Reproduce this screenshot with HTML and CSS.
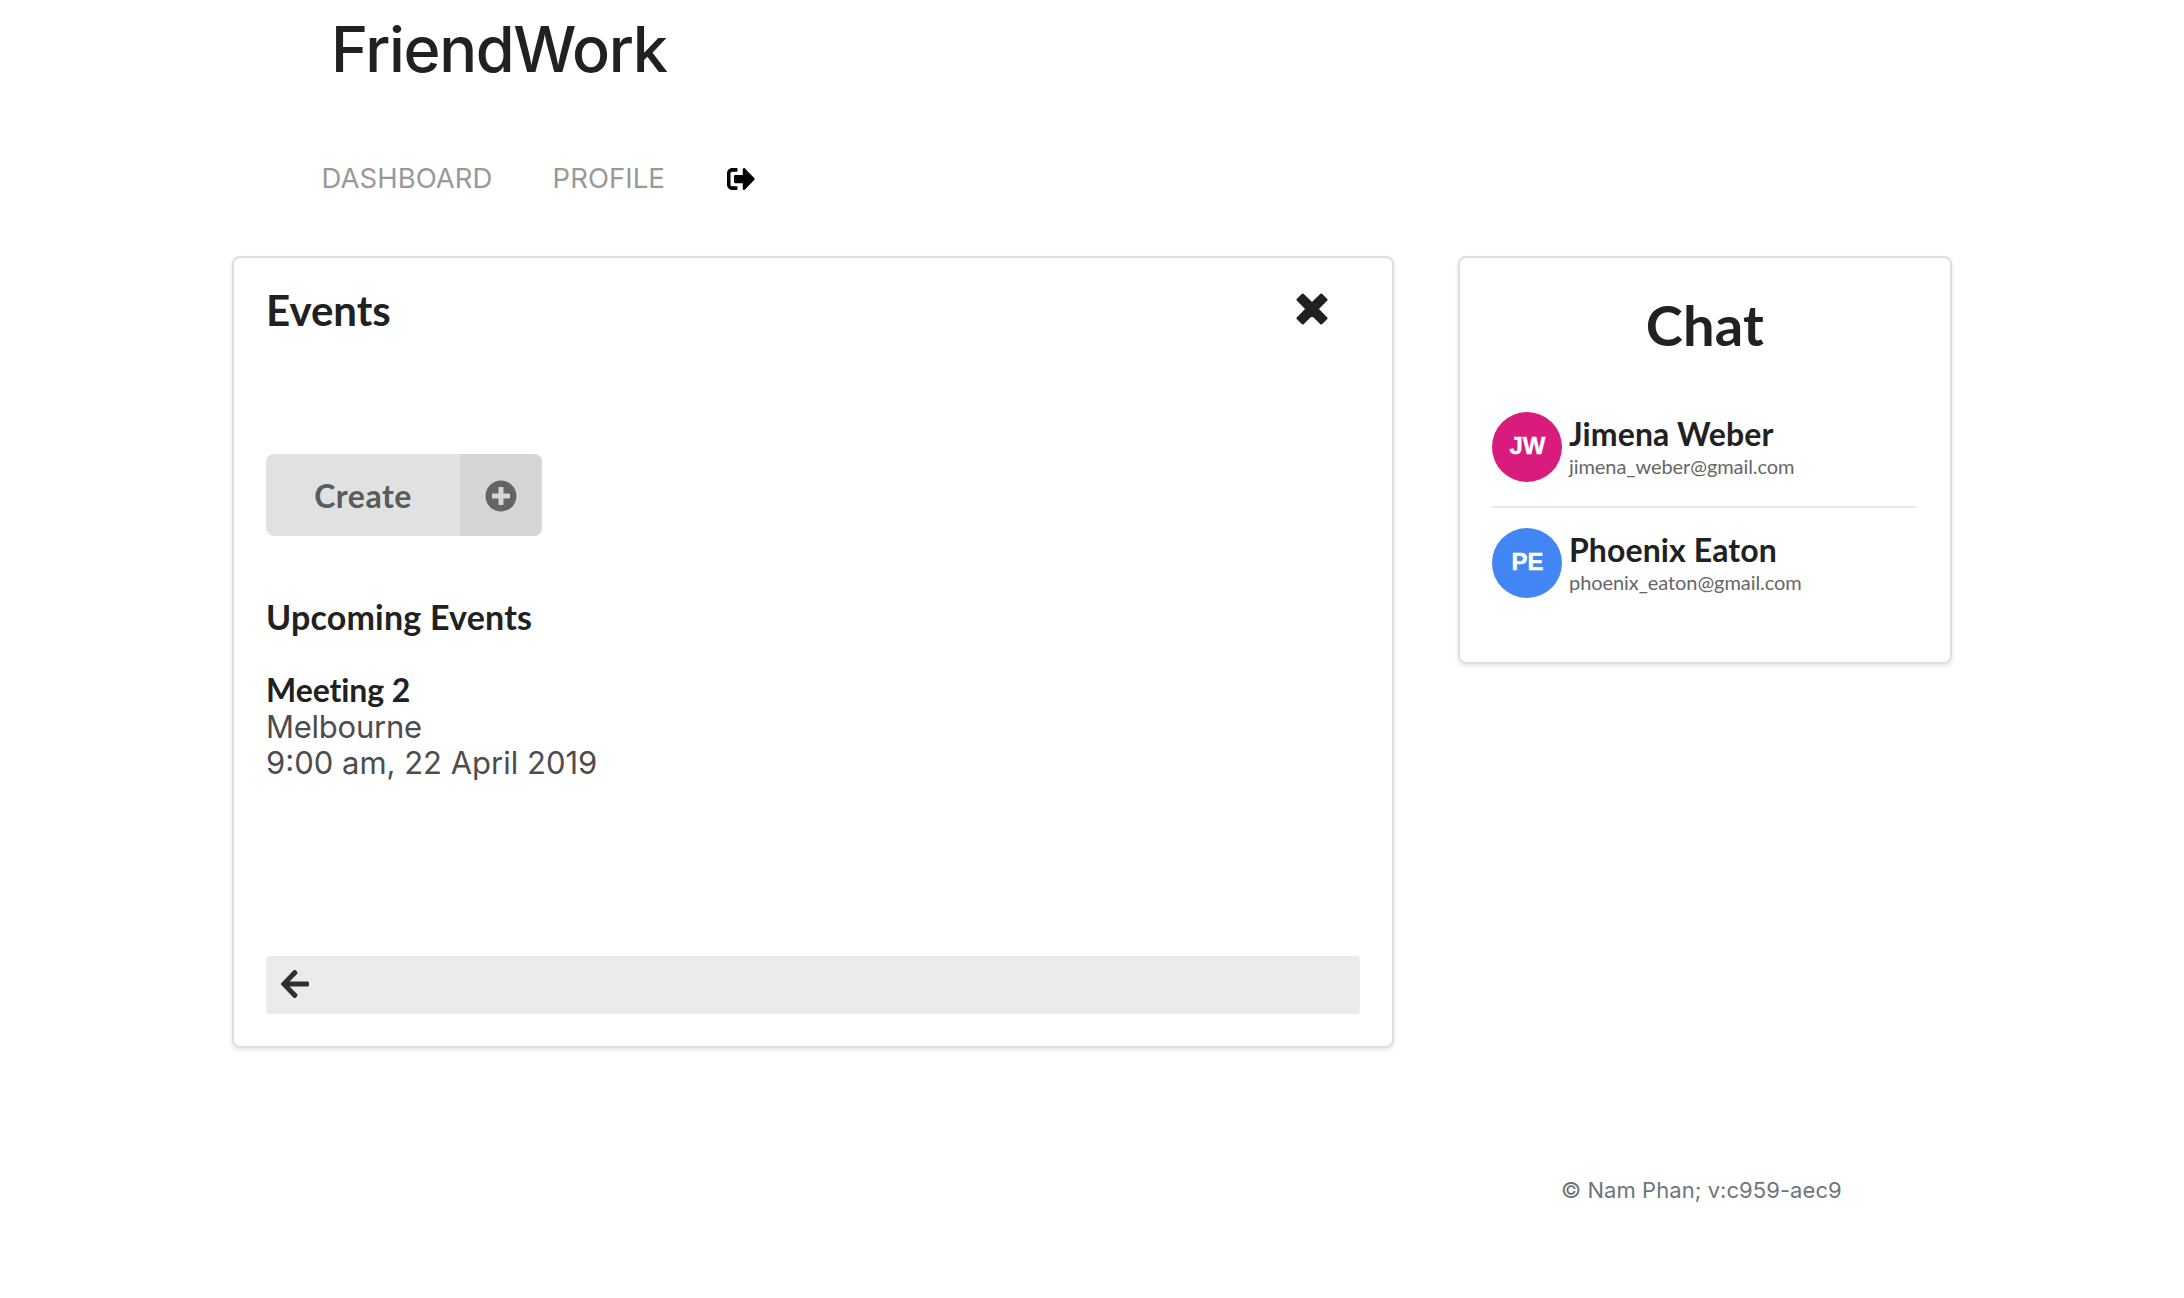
FILE: index.html
```html
<!DOCTYPE html>
<html lang="en">
<head>
<meta charset="utf-8">
<title>FriendWork</title>
<link rel="stylesheet" href="styles.css">
</head>
<body>
<header class="header">
  <h1 class="brand">FriendWork</h1>
  <nav class="nav">
    <a class="nav-link">DASHBOARD</a>
    <a class="nav-link">PROFILE</a>
    <a class="nav-logout" aria-label="Log out">
      <svg width="28" height="22" viewBox="0 64 512 384" preserveAspectRatio="none"><path d="M497 273L329 441c-15 15-41 4.500-41-17v-96H152c-13.300 0-24-10.700-24-24v-96c0-13.300 10.700-24 24-24h136V88c0-21.400 25.900-32 41-17l168 168c9.300 9.400 9.300 24.600 0 34zM192 436v-40c0-6.600-5.400-12-12-12H96c-17.700 0-32-14.300-32-32V160c0-17.700 14.300-32 32-32h84c6.600 0 12-5.400 12-12V76c0-6.600-5.400-12-12-12H96c-53 0-96 43-96 96v192c0 53 43 96 96 96h84c6.600 0 12-5.400 12-12z"/></svg>
    </a>
  </nav>
</header>
<main class="layout">
  <section class="card events">
    <div class="events-head">
      <h2 class="events-title">Events</h2>
      <svg class="close" width="32" height="32" viewBox="-16 -16 32 32"><path d="M-9.200 -14L0 -4.900 9.200 -14 14 -9.200 4.900 0 14 9.200 9.200 14 0 4.900 -9.200 14 -14 9.200 -4.900 0 -14 -9.200z"/></svg>
    </div>
    <button class="create" type="button">
      <span class="create-label">Create</span>
      <span class="create-icon"><svg width="32" height="32" viewBox="0 0 512 512"><path d="M256 8C119 8 8 119 8 256s111 248 248 248 248-111 248-248S393 8 256 8zm144 276c0 6.600-5.400 12-12 12h-92v92c0 6.600-5.400 12-12 12h-56c-6.600 0-12-5.400-12-12v-92h-92c-6.600 0-12-5.400-12-12v-56c0-6.600 5.400-12 12-12h92v-92c0-6.600 5.400-12 12-12h56c6.600 0 12 5.400 12 12v92h92c6.600 0 12 5.400 12 12v56z"/></svg></span>
    </button>
    <h3 class="upcoming">Upcoming Events</h3>
    <article class="event">
      <h4 class="event-name">Meeting 2</h4>
      <p class="event-line event-place">Melbourne</p>
      <p class="event-line">9:00 am, 22 April 2019</p>
    </article>
    <div class="back-bar">
      <svg class="back" width="28" height="28" viewBox="0 40 448 432" preserveAspectRatio="none"><path d="M257.500 445.100l-22.200 22.200c-9.400 9.400-24.600 9.400-33.900 0L7 273c-9.400-9.400-9.400-24.600 0-33.900L201.400 44.700c9.400-9.400 24.600-9.400 33.900 0l22.200 22.200c9.500 9.500 9.300 25-.4 34.300L136.600 216H424c13.300 0 24 10.700 24 24v32c0 13.300-10.700 24-24 24H136.600l120.500 114.800c9.800 9.300 10 24.800.4 34.300z"/></svg>
    </div>
  </section>
  <aside class="card chat">
    <h2 class="chat-title">Chat</h2>
    <ul class="contacts">
      <li class="contact">
        <span class="avatar avatar-pink">JW</span>
        <div class="contact-text">
          <div class="contact-name">Jimena Weber</div>
          <div class="contact-mail">jimena_weber@gmail.com</div>
        </div>
      </li>
      <li class="contact">
        <span class="avatar avatar-blue">PE</span>
        <div class="contact-text">
          <div class="contact-name">Phoenix Eaton</div>
          <div class="contact-mail">phoenix_eaton@gmail.com</div>
        </div>
      </li>
    </ul>
  </aside>
</main>
<footer class="footer">© Nam Phan; v:c959-aec9</footer>
</body>
</html>
```
FILE: styles.css
```css
* { box-sizing: border-box; }
body { margin: 0; background: #fff; color: #212121; font-family: Lato, sans-serif; }
h1, h2, h3, h4, p, ul { margin: 0; padding: 0; }
svg { display: block; fill: currentColor; }

.header { height: 256px; padding: 13px 0 0 331px; font-family: Inter, sans-serif; }
.brand { font-size: 63px; font-weight: 450; line-height: 72px; letter-spacing: -1.35px; }
.nav { display: flex; align-items: center; height: 40px; margin: 73px 0 0 -9.500px; }
.nav-link { color: #999; font-size: 27.5px; line-height: 40px; letter-spacing: .05px; margin-right: 60px; }
.nav-link + .nav-link { margin-right: 62px; }
.nav-logout { padding-top: 2px; color: #000; }

.layout { display: flex; align-items: flex-start; gap: 64px; padding-left: 232px; }
.card { padding: 32px; border: 2px solid #dededf; border-radius: 8px; box-shadow: 0 2px 4px rgba(34, 36, 38, .12); }
.events { display: flex; flex-direction: column; width: 1162px; height: 792px; }
.events-head { display: flex; justify-content: space-between; height: 164px; padding-right: 32px; }
.events-title { font-size: 42px; line-height: 41px; }
.close { margin-top: 2.5px; stroke: currentColor; stroke-width: 3; stroke-linejoin: round; }
.create { display: flex; width: 276px; height: 82px; padding: 0; border: 0; border-radius: 8px; overflow: hidden; background: #e0e1e2; color: #5a5b5b; font: 700 32px/84px Lato, sans-serif; letter-spacing: .5px; }
.create-label { width: 194px; text-align: center; }
.create-icon { display: flex; align-items: center; justify-content: center; width: 82px; height: 82px; padding-top: 2px; background: #d5d6d7; color: #636564; }
.upcoming { margin-top: 59px; font-size: 34px; line-height: 44px; letter-spacing: .2px; }
.event { margin-top: 33px; line-height: 36px; }
.event-name { font-size: 32px; letter-spacing: -.1px; }
.event-line { color: #4d4d4d; font-family: Inter, sans-serif; font-size: 31px; position: relative; top: 1px; }
.event-place { letter-spacing: -.25px; }
.back-bar { display: flex; align-items: center; height: 58px; margin-top: auto; padding: 0 0 2px 15px; border-radius: 4px; background: #ebebeb; color: #2f2f2f; }

.chat { width: 494px; height: 408px; }
.chat-title { margin-top: -1px; font-size: 56px; line-height: 72px; letter-spacing: .2px; text-align: center; }
.contacts { width: 424px; margin-top: 51px; list-style: none; }
.contact { display: flex; height: 94px; gap: 7px; }
.contact + .contact { height: 92px; padding-top: 20px; border-top: 2px solid #e9e9ea; }
.contact-text { padding-top: 2px; }
.avatar { width: 70px; height: 70px; padding-left: 1px; border-radius: 50%; color: #fff; font: 700 24px/68px "Liberation Sans", sans-serif; -webkit-text-stroke: .4px #fff; text-align: center; }
.avatar-pink { background: #d81b7d; }
.avatar-blue { background: #4285f4; }
.contact-name { font-size: 32px; font-weight: 700; line-height: 40px; letter-spacing: .1px; }
.contact-mail { color: #666; font-size: 20px; line-height: 24px; letter-spacing: -.07px; }

.footer { margin: 122px 0 0 1561px; color: #6c757d; font: 22px/40px Inter, sans-serif; letter-spacing: .06px; }
```
